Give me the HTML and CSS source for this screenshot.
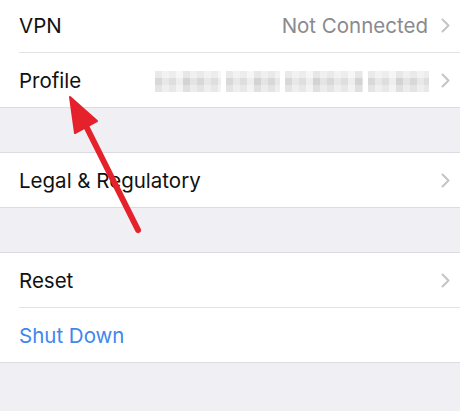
FILE: index.html
```html
<!DOCTYPE html>
<html>
<head>
<meta charset="utf-8">
<link rel="stylesheet" href="styles.css">
</head>
<body>
<div class="page">
  <div class="group first">
    <div class="row">
      <span class="label">VPN</span>
      <span class="value">Not Connected</span>
      <span class="chev"><svg width="9" height="15" viewBox="0 0 9 15"><path d="M1.5 1.5 L7.5 7.5 L1.5 13.5" fill="none" stroke="#c4c4c8" stroke-width="2" stroke-linecap="round" stroke-linejoin="round"/></svg></span>
    </div>
    <div class="sep"></div>
    <div class="row">
      <span class="label">Profile</span>
      <span class="blur">
        <span class="word w1"></span>
        <span class="word w2"></span>
        <span class="word w3"></span>
        <span class="word w4"></span>
      </span>
      <span class="chev"><svg width="9" height="15" viewBox="0 0 9 15"><path d="M1.5 1.5 L7.5 7.5 L1.5 13.5" fill="none" stroke="#c4c4c8" stroke-width="2" stroke-linecap="round" stroke-linejoin="round"/></svg></span>
    </div>
  </div>
  <div class="gap"></div>
  <div class="group">
    <div class="row">
      <span class="label">Legal &amp; Regulatory</span>
      <span class="chev"><svg width="9" height="15" viewBox="0 0 9 15"><path d="M1.5 1.5 L7.5 7.5 L1.5 13.5" fill="none" stroke="#c4c4c8" stroke-width="2" stroke-linecap="round" stroke-linejoin="round"/></svg></span>
    </div>
  </div>
  <div class="gap"></div>
  <div class="group">
    <div class="row">
      <span class="label">Reset</span>
      <span class="chev"><svg width="9" height="15" viewBox="0 0 9 15"><path d="M1.5 1.5 L7.5 7.5 L1.5 13.5" fill="none" stroke="#c4c4c8" stroke-width="2" stroke-linecap="round" stroke-linejoin="round"/></svg></span>
    </div>
    <div class="sep"></div>
    <div class="row">
      <span class="label blue">Shut Down</span>
    </div>
  </div>
</div>
<svg class="arrow" width="460" height="411" viewBox="0 0 460 411">
  <line x1="138" y1="230" x2="84" y2="122" stroke="#e5212b" stroke-width="6" stroke-linecap="round"/>
  <polygon points="70,97 75,133 97,121" fill="#e5212b" stroke="#e5212b" stroke-width="2" stroke-linejoin="round"/>
</svg>
</body>
</html>
```

FILE: styles.css
```css
html, body {
  margin: 0;
  padding: 0;
  background: #efeff4;
  width: 460px;
  height: 411px;
  overflow: hidden;
}
body {
  font-family: Inter, "Liberation Sans", sans-serif;
  position: relative;
}
.page {
  margin-top: -3px;
  display: flex;
  flex-direction: column;
}
.group {
  background: #fff;
  border-top: 1px solid #dcdce0;
  border-bottom: 1px solid #dcdce0;
}
.gap {
  height: 44px;
}
.row {
  height: 54px;
  display: flex;
  align-items: center;
  padding: 0 10px 0 19px;
}
.sep {
  height: 1px;
  background: #e3e3e6;
  margin-left: 19px;
}
.label {
  font-size: 20.5px;
  color: #111;
  flex: 1;
  padding-top: 1px;
}
.blue {
  color: #3f87ee;
}
.value {
  font-size: 20.5px;
  color: #8a8a8e;
  margin-right: 13px;
  padding-top: 1px;
}
.chev {
  display: flex;
  width: 9px;
  height: 15px;
}
.blur {
  display: flex;
  gap: 5px;
  margin-right: 12px;
  height: 21px;
  margin-top: 2px;
}
.word {
  display: block;
  height: 21px;
  background:
    linear-gradient(180deg, rgba(255,255,255,.45) 0 7px, rgba(0,0,0,0) 7px 14px, rgba(255,255,255,.3) 14px 21px),
    repeating-linear-gradient(90deg, #d8d8d8 0 7px, #e8e8e8 7px 14px, #dedede 14px 21px, #eeeeee 21px 28px, #d3d3d3 28px 35px, #e4e4e4 35px 42px);
}
.w1 { width: 66px; }
.w2 { width: 54px; }
.w3 { width: 78px; }
.w4 { width: 61px; }
.arrow {
  position: absolute;
  left: 0;
  top: 0;
}
```
